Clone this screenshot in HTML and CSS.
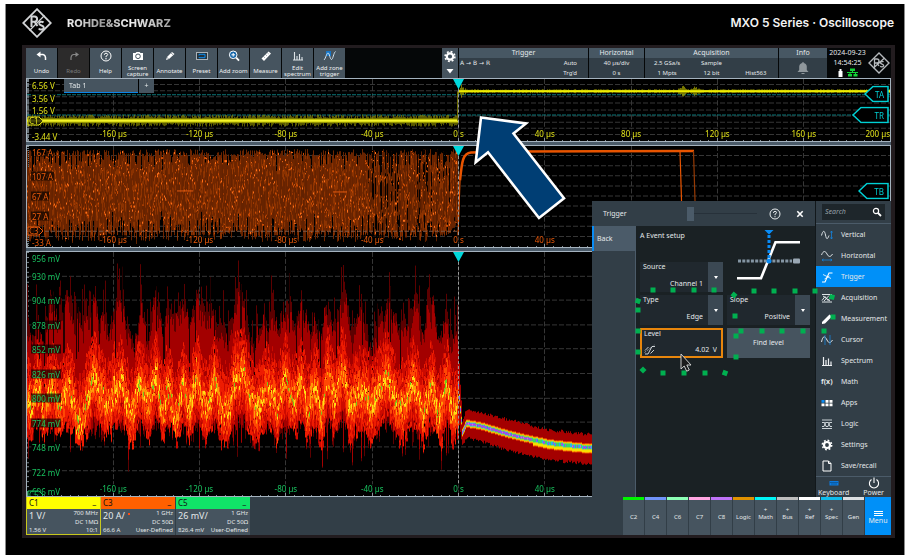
FILE: index.html
```html
<!DOCTYPE html>
<html lang="en">
<head>
<meta charset="utf-8">
<title>MXO 5 Series Oscilloscope</title>
<link rel="stylesheet" href="styles.css">
</head>
<body>
<main class="device">
  <header class="brand">
    <svg class="brand-logo" viewBox="0 0 30 30" aria-hidden="true"><g fill="none" stroke="#d2d4d6"><path d="M15 1.200 28.800 15 15 28.800 1.200 15Z" stroke-width="1.800"/><path d="M9.500 19V8.500h3a2.600 2.600 0 0 1 0 5.200h-3M12.500 13.700 15.500 18" stroke-width="2"/><path d="M21.500 14.500c-1.500-1.500-4.500-.8-4.300 1.200.3 2.200 4.600 1.500 4.600 4 0 2.200-3.800 2.500-5 .8" stroke-width="2"/><path d="M7.500 22.500 22.500 7.500" stroke-width="1.200"/></g></svg>
    <span class="brand-name">ROHDE&amp;SCHWARZ</span>
    <h1 class="model">MXO 5 Series · Oscilloscope</h1>
  </header>

  <section class="screen">
    <div class="topbar">
      <nav class="tools">
        <button class="tool"><svg viewBox="0 0 14 12"><path d="M3 4.500h5q3 .5 2.500 5.500" fill="none" stroke="#fff" stroke-width="1.500"/><path d="M5.500 1.500 1.500 4.500l4 3z" fill="#fff"/></svg><span>Undo</span></button>
        <button class="tool off" disabled><svg viewBox="0 0 14 12"><path d="M10 4.500H6.500Q3.500 5 4 10" fill="none" stroke="#888" stroke-width="1.200"/><path d="m8.500 2 3.500 2.500L8.500 7z" fill="#888"/></svg><span>Redo</span></button>
        <button class="tool"><svg viewBox="0 0 14 12"><circle cx="7" cy="6" r="5" fill="none" stroke="#fff"/><path d="M5.300 4.800q.2-1.600 1.700-1.600t1.700 1.400Q8.700 5.500 7 6.200v1" fill="none" stroke="#fff"/><circle cx="7" cy="8.700" r=".7" fill="#fff"/></svg><span>Help</span></button>
        <button class="tool"><svg viewBox="0 0 14 12"><path d="M2 3h2.500l1-1h3l1 1H12v7H2z" fill="#fff"/><circle cx="7" cy="6.300" r="2.300" fill="#fff" stroke="#46545f"/></svg><span>Screen<br>capture</span></button>
        <button class="tool"><svg viewBox="0 0 14 12"><path d="m3 10 1-3 5-5 2.500 2-5.500 5z" fill="#fff"/><path d="m3.800 7.300 2 1.700M8 3l2.300 2" stroke="#46545f" stroke-width=".6"/></svg><span>Annotate</span></button>
        <button class="tool"><svg viewBox="0 0 14 12"><rect x="1.500" y="2.500" width="11" height="7" fill="#26323a" stroke="#aab2b8"/><path d="M4 5.500V4.300h6v3.400H4V7" fill="none" stroke="#0c8df0"/></svg><span>Preset</span></button>
        <button class="tool"><svg viewBox="0 0 14 12"><circle cx="6.200" cy="4.800" r="3.800" fill="#1768ab" stroke="#fff"/><path d="M6.200 3v3.600M4.400 4.800H8" stroke="#fff"/><path d="m9.200 7.600 2.800 3" stroke="#fff" stroke-width="1.800"/></svg><span>Add zoom</span></button>
        <button class="tool"><svg viewBox="0 0 14 12"><path d="m2.500 8.500 7-7 2.500 2-7 7.500z" fill="#fff"/><path d="m4.500 6.500 1.300 1.200M6.500 4.500l1.300 1.200M8.300 2.700l1.300 1.200" stroke="#46545f" stroke-width=".6"/></svg><span>Measure</span></button>
        <button class="tool"><svg viewBox="0 0 14 12"><path d="M2 10h10M3.500 10V2M6 10V6M8.500 10V4M11 10V7" fill="none" stroke="#dde3e7" stroke-width="1.100"/></svg><span>Edit<br>spectrum</span></button>
        <button class="tool"><svg viewBox="0 0 14 12"><path d="M3 1h5v5H3z" fill="#1576c8"/><path d="M1 10C3 8 3.500 3 5 3s2 6.500 3.500 6.500S10.500 3 12.500 1.500" fill="none" stroke="#cfe0ee"/></svg><span>Add zone<br>trigger</span></button>
      </nav>
      <div class="readouts">
        <button class="gear" aria-label="Trigger options"><svg viewBox="0 0 14 28"><circle cx="7" cy="7.500" r="3.200" fill="none" stroke="#fff" stroke-width="2.200"/><circle cx="7" cy="7.500" r="4.900" fill="none" stroke="#fff" stroke-width="1.600" stroke-dasharray="1.900 1.950"/><path d="M3.500 20h7L7 24.500z" fill="#fff"/></svg></button>
        <section class="readout trig"><h2>Trigger</h2><div class="cells"><span class="chain">A → B → R</span><span class="end">Auto</span><span></span><span class="end">Trg'd</span></div></section>
        <section class="readout horiz"><h2>Horizontal</h2><div class="cells"><span>40 µs/div</span><span>0 s</span></div></section>
        <section class="readout acq"><h2>Acquisition</h2><div class="cells"><span>2.5 GSa/s</span><span>Sample</span><span></span><span>1 Mpts</span><span>12 bit</span><span>Hist563</span></div></section>
        <section class="readout info"><h2>Info</h2><svg viewBox="0 0 14 14"><path d="M1.500 11h11l-1.700-2V5.500Q10.500 2 7 2T3.200 5.500V9z" fill="#8f979c"/><path d="M7 1v2M5.500 12.500h3" stroke="#8f979c" stroke-width="1.200"/></svg></section>
        <div class="clock"><time>2024-09-23</time><time>14:54:25</time>
          <svg viewBox="0 0 24 9"><path d="M2.500 3h4v6h-4zM3.500 1h2v2h-2z" fill="#fff"/><path d="M14 .5h5V3h-5zM12 6h4v2.500h-4zM17.500 6h4v2.500h-4z" fill="#12d436"/><path d="M16.500 3v1.500M11 4.500h11M14 4.500V6M19.500 4.500V6" stroke="#12d436"/></svg></div>
        <svg class="mini-logo" viewBox="0 0 22 22" aria-hidden="true"><g fill="none" stroke="#b6babd"><path d="M11 1 21 11 11 21 1 11Z" stroke-width="1.400"/><path d="M6.500 14.500V7H9a2 2 0 0 1 0 4H6.500M9 11l2 3M15.500 10c-1-1-3-.5-3 .8.2 1.500 3.200 1 3.200 2.800 0 1.500-2.700 1.700-3.500.6M5.500 16l11-10" stroke-width="1.300"/></g></svg>
      </div>
    </div>

    <div class="workspace">
      <div class="plot plot-a" id="plotA"><canvas></canvas>
        <div class="tabs"><button class="tab">Tab 1</button><button class="tab add" aria-label="Add tab">+</button></div>
      </div>
      <div class="plot plot-b" id="plotB"><canvas></canvas></div>
      <div class="plot plot-c" id="plotC"><canvas></canvas></div>

      <div class="overlay">
        <section class="dialog">
          <header class="dialog-head">
            <h2>Trigger</h2>
            <input class="opacity" type="range" min="0" max="100" value="0" aria-label="Transparency">
            <button class="icon-btn" aria-label="Help"><svg viewBox="0 0 12 12"><circle cx="6" cy="6" r="5" fill="none" stroke="#e8ecee"/><path d="M4.500 5q0-1.700 1.500-1.700T7.500 4.700Q7.500 5.500 6 6.200v1" fill="none" stroke="#e8ecee"/><circle cx="6" cy="8.700" r=".6" fill="#e8ecee"/></svg></button>
            <button class="icon-btn" aria-label="Close"><svg viewBox="0 0 12 12"><path d="m3.300 3.300 5.400 5.400M8.700 3.300 3.300 8.700" stroke="#fff" stroke-width="1.600"/></svg></button>
          </header>
          <div class="dialog-side"><button class="back">Back</button></div>
          <form class="dialog-body">
            <h3>A Event setup</h3>
            <svg class="edge" viewBox="0 0 67 54" aria-hidden="true"><path d="M1 50.300h24L39.500 14.300H64" fill="none" stroke="#fff" stroke-width="2.600"/><path d="M2 33h54" stroke="#8495a3" stroke-width="3" stroke-dasharray="3 1.300"/><rect x="57" y="30.500" width="7" height="5" rx="1" fill="#9aa8b4"/><path d="M33 2v29" stroke="#0a8cf5" stroke-width="3" stroke-dasharray="3 2"/><path d="M28.500 2h9L33 6.500z" fill="#0a8cf5"/><circle cx="33" cy="33" r="2.500" fill="#0a8cf5"/></svg>
            <div class="field source"><label for="source">Source</label><select id="source"><option>Channel 1</option></select><i class="drop"></i></div>
            <div class="field"><label for="type">Type</label><select id="type"><option>Edge</option></select><i class="drop"></i></div>
            <div class="field"><label for="slope">Slope</label><select id="slope"><option>Positive</option></select><i class="drop"></i></div>
            <div class="field level"><label for="level">Level</label><input id="level" type="text" value="4.02  V"><svg viewBox="0 0 12 11"><path d="M1 10h3l4-7.500h3M1 6.500 4.500 3M6.500 9.500 10 6" fill="none" stroke="#dde3e6" stroke-width=".9"/><path d="M.5 8.500 10.500 1" stroke="#dde3e6" stroke-width=".6" stroke-dasharray="2 1"/></svg></div>
            <button class="find" type="button">Find level</button>
          </form>
        </section>
        <nav class="menu">
          <div class="search"><input type="search" placeholder="Search" aria-label="Search"><svg viewBox="0 0 10 10"><circle cx="4" cy="4" r="2.600" fill="none" stroke="#fff" stroke-width="1.200"/><path d="m6 6 3 3" stroke="#fff" stroke-width="1.800"/></svg></div>
          <div class="items">
            <a href="#vertical"><svg viewBox="0 0 12 12"><path d="M.5 6.500C2 1 3.500 1 4.500 6s2 4.500 3.500.500" fill="none" stroke="#dde3e6"/><path d="M10.500 2v8M9.500 3.500l1-1.500 1 1.500M9.500 8.500l1 1.500 1-1.500" fill="none" stroke="#1584dd" stroke-width=".8"/></svg>Vertical</a>
            <a href="#horizontal"><svg viewBox="0 0 12 12"><path d="M.5 5C2.500 0 4.500 1 6 4s3.500 3.500 5.500 0" fill="none" stroke="#dde3e6"/><path d="M1 10h10M2.500 9 1 10l1.500 1M9.500 9l1.500 1-1.500 1" fill="none" stroke="#1584dd" stroke-width=".8"/></svg>Horizontal</a>
            <a href="#trigger" class="current"><svg viewBox="0 0 12 12"><path d="M1 11h3L8 2h3.500" fill="none" stroke="#fff" stroke-width="1.100"/><path d="m2 3.500 8 4M8.500 5l-5 3" stroke="#fff" stroke-width=".8"/></svg>Trigger</a>
            <a href="#acquisition"><svg viewBox="0 0 12 12"><path d="M1 2.500h10M1 10h10M1 8.500l3-4 3 4 3-4 1 1M2 4l7 5M8 3.500 3 9" fill="none" stroke="#dde3e6"/></svg>Acquisition</a>
            <a href="#measurement"><svg viewBox="0 0 12 12"><path d="m1 9 7.500-7.500 2.500 2L4 10.500l-3 .5z" fill="#fff"/></svg>Measurement</a>
            <a href="#cursor"><svg viewBox="0 0 12 12"><path d="M.5 8C2 1 4 2 6 6s3.500 3 5.500 0" fill="none" stroke="#dde3e6"/><path d="M4 1v10M9 1v10" stroke="#1584dd" stroke-width=".8"/></svg>Cursor</a>
            <a href="#spectrum"><svg viewBox="0 0 12 12"><path d="M1 10.500h10M2.500 10V2M5 10V5M7.500 10V3.500M10 10V6.500" fill="none" stroke="#eef1f3" stroke-width="1.200"/></svg>Spectrum</a>
            <a href="#math"><b class="fx">f(x)</b>Math</a>
            <a href="#apps"><svg viewBox="0 0 12 12"><path d="M.5 3h3v2.700h-3z" fill="#0a8cf5"/><path d="M4.500 3h3v2.700h-3zM8.500 3h3v2.700h-3zM.5 6.500h3v2.700h-3zM4.500 6.500h3v2.700h-3zM8.500 6.500h3v2.700h-3z" fill="#fff"/></svg>Apps</a>
            <a href="#logic"><svg viewBox="0 0 12 12"><path d="M1 2h10M1 10.500h10M1 4.500h2.500l1.500 4h2l1.500-4H11M1 8.500h2l1.500-4h3l1.500 4h2" fill="none" stroke="#dde3e6" stroke-width=".9"/></svg>Logic</a>
            <a href="#settings"><svg viewBox="0 0 12 12"><circle cx="6" cy="6" r="3" fill="none" stroke="#fff" stroke-width="2.200"/><circle cx="6" cy="6" r="4.700" fill="none" stroke="#fff" stroke-width="1.500" stroke-dasharray="1.800 1.890"/></svg>Settings</a>
            <a href="#save"><svg viewBox="0 0 12 12"><path d="M2 1h5.500L10 3.500V11H2zM7.500 1v2.500H10" fill="none" stroke="#fff"/></svg>Save/recall</a>
          </div>
          <div class="system">
            <button><svg viewBox="0 0 12 12"><path d="M1.500 4h9v4.500h-9z" fill="#0d7be0"/><path d="M2.500 5.500h7M3.500 7h5" stroke="#0b3c66" stroke-dasharray="1 1"/></svg>Keyboard</button>
            <button><svg viewBox="0 0 12 12"><path d="M3.500 2.500a4.600 4.600 0 1 0 5 0M6 .5V6" fill="none" stroke="#fff" stroke-width="1.100"/></svg>Power</button>
          </div>
        </nav>
      </div>
    </div>

    <footer class="dock">
      <section class="channel c1"><h2>C1<i>_</i></h2><div class="vals"><strong>1 V/</strong><span>700 MHz</span><span>DC 1MΩ</span><em>1.56 V</em><span>10:1</span></div></section>
      <section class="channel c3"><h2>C3<i>_</i></h2><div class="vals"><strong>20 A/<sup></sup></strong><span>1 GHz</span><span>DC 50Ω</span><em>66.6 A</em><span>User-Defined</span></div></section>
      <section class="channel c5"><h2>C5<i>_</i></h2><div class="vals"><strong>26 mV/</strong><span>1 GHz</span><span>DC 50Ω</span><em>826.4 mV</em><span>User-Defined</span></div></section>
      <div class="sources">
        <button class="s-c2">C2</button><button class="s-c4">C4</button><button class="s-c6">C6</button><button class="s-c7">C7</button><button class="s-c8">C8</button><button class="s-logic">Logic</button><button class="s-math"><small>+</small>Math</button><button class="s-bus"><small>+</small>Bus</button><button class="s-ref"><small>+</small>Ref</button><button class="s-spec"><small>+</small>Spec</button><button class="s-gen">Gen</button>
        <button class="menu-btn"><svg viewBox="0 0 9 5"><path d="M0 .5h9M0 2.500h9M0 4.500h9" stroke="#fff"/></svg>Menu</button>
      </div>
    </footer>
  </section>
</main>

<svg class="notes" viewBox="0 0 908 558" aria-hidden="true">
  <path d="M481 117.500 526 123.500 513.500 133.500 564 198.300 539 218 488 152.300 475.700 162.300Z" fill="#003e74" stroke="#fff" stroke-width="2.600"/>
  <g fill="#00b050" id="dots"></g>
  <path d="M681 354v15l3.200-3 2.500 5.200 2.600-1.200-2.500-5h4.200z" fill="#1c1c1c" stroke="#ddd" stroke-width=".9"/>
</svg>
<script src="scope.js"></script>
</body>
</html>
```

FILE: styles.css
```css
* { box-sizing: border-box; }
html { background: #fff; }
body {
  position: relative;
  margin: 0;
  min-height: 100vh;
  padding: 4px 3px 3px 5px;
  display: flex;
  font-family: "Noto Sans", "Open Sans", sans-serif;
  font-size: 7px;
  line-height: 10px;
  color: #e4e8ea;
}
h1, h2, h3 { margin: 0; font-weight: 400; font-size: inherit; }
button, input, select { font: inherit; color: inherit; border: 0; margin: 0; padding: 0; background: none; border-radius: 0; }
i, em { font-style: normal; }
svg { display: block; }

.device {
  flex: 1;
  display: flex;
  flex-direction: column;
  background: #000;
  border: solid #8b8b8b;
  border-width: 0 1px;
  padding: 0 9px 17px 16px;
}
.brand { height: 41px; display: flex; align-items: center; padding: 0 1px 4px 0; }
.brand-logo { width: 30px; height: 30px; }
.brand-name {
  margin-left: 15px;
  font: 800 11px/14px Inter, sans-serif;
  color: transparent;
  background: linear-gradient(90deg, #f2f2f2, #999 35%, #f2f2f2 60%, #a2a2a2);
  background-clip: text;
}
.model { margin-left: auto; font: 600 12px/16px Inter, sans-serif; color: #f2f2f2; }

.screen { flex: 1; display: flex; flex-direction: column; border: 3px solid #221c1f; border-left-width: 4px; border-right-width: 4px; }

.topbar { display: flex; justify-content: space-between; height: 30px; background: #050708; }
.tools { display: flex; gap: 1px; }
.tool {
  width: 31px;
  background: #46545f;
  font-size: 6px;
  line-height: 6px;
  display: grid;
  grid-template-rows: 15px 15px;
  place-items: center;
  color: #f0f2f3;
}
.tool.off { background: #2c2b2b; color: #77797a; }
.tool svg { width: 14px; height: 12px; }

.readouts { display: flex; gap: 1px; font-size: 6px; }
.gear { width: 16px; background: #46545f; }
.gear svg { width: 14px; height: 28px; margin: auto; }
.readout { background: #323e47; }
.readout h2 { background: #475763; text-align: center; font-size: 7px; line-height: 10px; }
.readout svg { width: 14px; height: 14px; margin: 3px auto; }
.cells { display: grid; grid-auto-rows: 10px; text-align: center; }
.trig { width: 129px; }
.trig .cells { grid-template-columns: 1fr 1fr; padding: 0 11px 0 1px; text-align: left; }
.trig .end { text-align: right; }
.trig .chain { font-family: "DejaVu Sans", sans-serif; }
.horiz { width: 55px; }
.acq { width: 133px; }
.acq .cells { grid-template-columns: 1fr 1fr 1fr; }
.info { width: 48px; }
.clock { width: 39px; display: grid; justify-items: center; align-content: start; grid-auto-rows: 10px; font-size: 7px; line-height: 9px; }
.clock svg { width: 24px; height: 9px; }
.mini-logo { width: 22px; height: 22px; align-self: center; margin: 0 1px 0 0; }

.workspace { flex: 1; min-height: 400px; position: relative; display: flex; flex-direction: column; gap: 3px; background: #4b5b69; }
.plot { position: relative; background: #000; border: 1px solid #a4b2be; overflow: hidden; flex-basis: 0; font-size: 8px; line-height: 9px; }
.plot canvas { position: absolute; inset: 0; width: 100%; height: 100%; }
.plot-a { flex-grow: 63; color: #e2e21a; }
.plot-b { flex-grow: 102; color: #ec5a0a; }
.plot-c { flex-grow: 248; color: #18c05e; }
.y-label { position: absolute; left: 4px; padding: 0 1px; background: rgba(0, 0, 0, .65); transform: translateY(-50%); white-space: nowrap; }
.x-label { position: absolute; bottom: 3px; background: rgba(0, 0, 0, .65); transform: translateX(-50%); white-space: nowrap; }
.x-label.last { transform: translateX(-100%); }
.flag { position: absolute; right: 1px; height: 17px; transform: translateY(-50%); }
.marker { position: absolute; left: 0; width: 17px; height: 10px; transform: translateY(-50%); }
.tabs { position: absolute; left: 37px; top: 0; display: flex; gap: 1px; z-index: 1; color: #e4e8ea; }
.tab { width: 74px; height: 14px; padding-left: 5px; background: #46545f; border-bottom: 1px solid #0a86e8; text-align: left; font-size: 7px; }
.tab.add { width: 15px; padding: 0; text-align: center; border-bottom-color: #46545f; }

.overlay { position: absolute; right: 0; bottom: 0; top: 123px; display: grid; grid-template-columns: 223px 75px; gap: 1px; background: #12181b; z-index: 2; }
.dialog { display: grid; grid-template: 25px 1fr / 44px 1fr; background: #1a2124; }
.dialog-head { grid-column: 1 / 3; display: flex; align-items: center; background: #323e47; padding: 0 9px 0 11px; }
.opacity { -webkit-appearance: none; appearance: none; width: 70px; height: 14px; margin-left: auto; margin-right: 12px; background: linear-gradient(#27313a, #27313a) center / 100% 1px no-repeat; }
.opacity::-webkit-slider-thumb { -webkit-appearance: none; width: 7px; height: 14px; background: #4b5b69; }
.icon-btn svg { width: 12px; height: 12px; }
.icon-btn + .icon-btn { margin-left: 13px; }
.dialog-side { background: #323e47; border-right: 1px solid #4b5b69; }
.back { width: 100%; height: 25px; padding-left: 3px; text-align: left; background: #4b5b69; border-left: 2px solid #0a8cf5; }
.dialog-body { display: grid; grid-template-columns: 1fr 1fr; grid-template-rows: 33px; grid-auto-rows: 30px; gap: 3px 4px; padding: 0 5px 0 4px; align-content: start; }
.dialog-body h3 { line-height: 20px; }
.edge { grid-area: 1 / 2 / 3 / 3; width: 67px; height: 54px; margin: 2px 0 0 9px; }
.source { grid-area: 2 / 1; }
.field { display: grid; grid-template: 10px 1fr / 1fr 15px; background: #20282e; }
.field label { grid-area: 1 / 1; padding-left: 3px; z-index: 1; }
.field select, .field input { grid-area: 1 / 1 / 3 / 3; width: 100%; min-width: 0; padding: 14px 20px 0 0; text-align: right; text-align-last: right; -webkit-appearance: none; appearance: none; }
.drop { grid-area: 1 / 2 / 3 / 3; background: #3b4853; display: grid; place-items: center; pointer-events: none; }
.drop::before { content: ""; border: 2px solid transparent; border-top: 3px solid #fff; border-bottom: 0; }
.level { border: 2px solid #e8860c; }
.level label { padding-left: 2px; line-height: 7px; }
.level input { padding: 14px 4px 0 14px; white-space: pre; }
.level svg { grid-area: 2 / 1; width: 12px; height: 11px; margin: 4px 0 0 2px; }
.find { background: #46545f; }

.menu { display: flex; flex-direction: column; background: #323e47; }
.search { display: flex; align-items: center; margin: 3px 6px; padding: 0 3px; height: 16px; background: #1e262b; }
.search input { width: 100%; min-width: 0; outline: 0; }
.search input::placeholder { color: #97a1a8; font-style: italic; opacity: 1; }
.search svg { width: 10px; height: 10px; flex: none; }
.items { flex: 1; display: grid; grid-auto-rows: 1fr; border: solid #4b5b69; border-width: 1px 0; }
.items a { display: flex; align-items: center; gap: 8px; padding-left: 5px; color: inherit; text-decoration: none; }
.items a svg, .fx { width: 12px; height: 12px; }
.fx { font-size: 7px; line-height: 12px; }
.items a.current { background: #0090f8; }
.system { height: 20px; display: flex; justify-content: space-between; padding: 0 7px 0 2px; }
.system button { display: grid; justify-items: center; line-height: 8px; }
.system svg { width: 12px; height: 12px; }

.dock { display: flex; height: 38px; background: #323e47; font-size: 6px; }
.channel { width: 75px; border-right: 1px solid #323e47; background: #46545f; }
.channel h2 { display: flex; justify-content: space-between; padding: 0 4px 0 2px; height: 12px; font-size: 8px; line-height: 12px; color: #111; }
.channel h2 i { line-height: 8px; }
.c1 { border: 1px solid #c8c81e; border-top: 0; }
.c1 h2 { background: #ff0; }
.c3 h2 { background: #ff6000; }
.c5 h2 { background: #10e468; }
.vals { display: grid; grid-template-columns: auto 1fr; grid-template-rows: 9px 8px 8px; line-height: 9px; padding: 0 2px; }
.vals strong { grid-row: 1 / 3; font-weight: 400; font-size: 9px; line-height: 13px; }
.vals sup { display: inline-block; width: 2px; height: 2px; margin-left: 3px; background: #ff4b12; }
.vals span { text-align: right; }
.sources { margin-left: auto; display: flex; gap: 1px; }
.sources button { width: 21px; background: #46545f; border-top: 3px solid #fff; line-height: 7px; display: flex; flex-direction: column; align-items: center; justify-content: center; }
.sources small { font-size: 6px; height: 7px; margin-top: -7px; }
.sources .s-c2 { border-color: #00f400; }
.sources .s-c4 { border-color: #7093fa; }
.sources .s-c6 { border-color: #8dffb6; }
.sources .s-c7 { border-color: #ffa6e2; }
.sources .s-c8 { border-color: #bf73f8; }
.sources .s-logic { border-color: #e09100; }
.sources .s-math { border-color: #00f6f6; }
.sources .s-bus { border-color: #bdbdbd; }
.sources .s-spec { border-color: #0fbcec; }
.sources .s-gen { border-color: #dcdfe2; }
.sources .menu-btn { width: 26px; background: #0090f8; border-color: #0090f8; font-size: 7px; gap: 1px; }
.menu-btn svg { width: 9px; height: 5px; }

.notes { position: absolute; left: 0; top: 0; width: 100%; z-index: 3; pointer-events: none; }
```

FILE: scope.js
```js
// Deterministic noise source so every repaint draws the same trace
let seed = 7;
function rnd() {
  seed = (seed * 1664525 + 1013904223) >>> 0;
  return seed / 4294967296;
}
function gauss() { return (rnd() + rnd() + rnd() + rnd() - 2) / 1.15; }

const ZERO = 431;   // trace x of t = 0 in plot units
const WIDTH = 863;

function rect(c, x, y, w, h, color) { c.fillStyle = color; c.fillRect(x, y, w, h); }

function lerpPath(points, x) {
  for (let i = 1; i < points.length; i++) {
    if (x <= points[i][0]) {
      const [x0, y0] = points[i - 1], [x1, y1] = points[i];
      return y0 + (y1 - y0) * (x - x0) / (x1 - x0);
    }
  }
  return points[points.length - 1][1];
}

function grid(c, h, rows) {
  c.strokeStyle = "#363636";
  c.lineWidth = 1;
  c.setLineDash([5, 2]);
  c.beginPath();
  for (let i = 1; i < rows; i++) {
    const y = Math.round(h * i / rows) - .5;
    c.moveTo(0, y); c.lineTo(WIDTH, y);
  }
  for (let i = 1; i < 10; i++) {
    const x = Math.floor(WIDTH * i / 10) + .5;
    c.moveTo(x, 0); c.lineTo(x, h);
  }
  c.stroke();
  c.setLineDash([]);
  for (let i = 0; i < 100; i++) rect(c, Math.floor(i * WIDTH / 100), h - (i % 10 ? 1 : 4), 1, 4, "#8a949c");
  for (let y = 0; y < h; y += h / rows / 5) rect(c, 0, Math.round(y), 2, 1, "#7b858d");
}

function triggerMark(c, h) {
  c.strokeStyle = "#999";
  c.setLineDash([3, 2]);
  c.beginPath(); c.moveTo(ZERO + .5, 0); c.lineTo(ZERO + .5, h); c.stroke();
  c.setLineDash([]);
  c.fillStyle = "#00d8dc";
  c.beginPath(); c.moveTo(ZERO - 5, 0); c.lineTo(ZERO + 6, 0); c.lineTo(ZERO + .5, 10); c.fill();
}

function drawA(c, h) {
  grid(c, h, 10);
  c.strokeStyle = "#0a7678";
  c.setLineDash([4, 1]);
  c.beginPath(); c.moveTo(0, 15.500); c.lineTo(WIDTH, 15.500); c.moveTo(0, 35.500); c.lineTo(WIDTH, 35.500); c.stroke();
  c.setLineDash([]);
  for (let x = 0; x < ZERO; x++) {
    const up = 2 + rnd() * 4, down = 2 + rnd() * 4;
    rect(c, x, 41 - up, 1, up + down, "rgba(150,150,0,.6)");
    rect(c, x, 39, 1, 4, "#a8a800");
    rect(c, x, 40, 1, 2, "#f4f428");
  }
  rect(c, ZERO - 1, 12, 1, 29, "#6d6d00");
  for (let x = ZERO; x < WIDTH; x++) {
    let a = 1 + rnd();
    for (const b of [ZERO + 3, 655, 669]) {
      const d = Math.abs(x - b);
      if (d < 6) a += (6 - d) * .9 * rnd();
    }
    rect(c, x, 12 - a, 1, 2 * a, "rgba(170,170,0,.7)");
    rect(c, x, 11, 1, 2, "#eeee00");
  }
}

function drawB(c, h) {
  grid(c, h, 10);
  for (let x = 0; x < ZERO; x++) {
    const sparse = x > 340;
    const top = 3 + rnd() * 7 + (rnd() < .25 ? rnd() * 16 : 0);
    const bottom = h - 17 + rnd() * 12 - (rnd() < .3 ? rnd() * 20 : 0);
    const glow = sparse ? 84 + rnd() * 30 : 98 + rnd() * 16;
    rect(c, x, top, 1, bottom - top, `rgb(${glow},${glow * .34},0)`);
    if (sparse && rnd() < .25) rect(c, x, top, 1, 20 + rnd() * 40, "#080200");
    if (sparse && rnd() < .15) rect(c, x, bottom - 30 * rnd(), 1, 30, "#080200");
    for (let k = 0; k < 4; k++) {
      const y = Math.round(top + 3 + rnd() * (bottom - top - 6));
      rect(c, x, y, 1, 3 + Math.round(rnd() * 5), "rgba(160,60,2,.6)");
    }
    for (let k = 0; k < 3; k++) {
      const y = Math.round(top + rnd() * (bottom - top - 3));
      rect(c, x, y, rnd() < .3 ? 2 : 1, 1 + Math.round(rnd()), rnd() < .35 ? "#ff701a" : "#cc4c04");
    }
  }
  rect(c, 150, 44, 16, 1, "#e05a10");
  rect(c, 306, 45, 14, 1, "#e05a10");
  c.strokeStyle = "#7c5a48";
  c.setLineDash([4, 2]);
  c.beginPath(); c.moveTo(0, 84.500); c.lineTo(ZERO, 84.500); c.stroke();
  c.setLineDash([]);
  c.strokeStyle = "#e85400";
  c.lineWidth = 1.200;
  c.beginPath(); c.moveTo(ZERO, 89); c.lineTo(ZERO + 2, 34); c.stroke();
  c.lineWidth = 2.500;
  c.beginPath(); c.moveTo(ZERO + 2, 34); c.bezierCurveTo(ZERO + 4, 14, ZERO + 5, 7.500, ZERO + 13, 6.500);
  c.lineTo(ZERO + 55, 5.500); c.lineTo(667, 5); c.stroke();
  c.lineWidth = 1.200;
  c.beginPath(); c.moveTo(653, 5); c.lineTo(655, 70); c.stroke();
  c.strokeStyle = "#963a04";
  c.beginPath(); c.moveTo(666.500, 5); c.lineTo(668.500, 70); c.stroke();
  c.lineWidth = 1;
}

// Density trace: dark red envelope, with a hot core that wanders from column to column
function drawC(c, h) {
  grid(c, h, 10);
  let drift = 0, reach = 0, spike = 0;
  for (let x = 0; x < ZERO; x++) {
    drift = drift * .8 + gauss() * 9;
    reach = reach * .7 + gauss() * 13;
    const wave = Math.sin(x / 2.900 + Math.sin(x / 23) * 3) * 13 + Math.sin(x / 7.300) * 5;
    const mid = 141 + wave + drift * .7;
    spike = rnd() < .22 ? rnd() * 42 : spike * .35;
    const top = Math.max(5, 66 + wave * .9 - reach - spike);
    const bottom = Math.min(224, 183 + wave * .5 + gauss() * 11 + (rnd() < .1 ? rnd() * 26 : 0));
    rect(c, x, top, 1, bottom - top, "#5c0000");
    const solid = Math.max(top, 74 + wave * .8 - reach + gauss() * 8);
    rect(c, x, solid, 1, bottom - solid - rnd() * 14, "#a30000");
    if (rnd() < .1) rect(c, x, top, 1, 40 + rnd() * 20, "#240000");
    for (let y = mid - 44; y < mid + 38; y += 4) {
      const d = (y - mid) / 24;
      const v = Math.exp(-d * d) * .62 + rnd() * .5 - .12;
      if (v > .12 && y < bottom - 4) {
        const color = v > .96 ? "#74c81c" : v > .88 ? "#ffe014" : v > .76 ? "#ff9a08" : v > .54 ? "#ff4804" : v > .32 ? "#ee1c02" : "#cc0a00";
        rect(c, x, Math.round(y + rnd() * 2), rnd() < .4 ? 2 : 1, 4 + Math.round(rnd() * 3), color);
      }
    }
  }
  const mid = [[431, 135], [435, 182], [439, 173], [452, 175], [479, 183], [499, 188], [522, 193], [545, 195.500], [565, 197.500], [863, 205]];
  const up = [[431, 40], [435, 10], [439, 12], [452, 12], [485, 13], [522, 12], [565, 12], [863, 12]];
  const down = [[431, 30], [435, 12], [439, 13], [452, 14], [485, 15], [522, 15], [565, 15], [863, 15]];
  for (let x = ZERO; x < WIDTH; x++) {
    const m = Math.round(lerpPath(mid, x));
    const u = lerpPath(up, x) + rnd() * 3, d = lerpPath(down, x) + rnd() * 3;
    rect(c, x, m - u, 1, u + d, "#a40000");
    const wide = x > 505 ? 2 : 0;
    rect(c, x, m - 4, 1, 8 + wide, rnd() < .5 ? "#ff7a00" : "#ff4a00");
    rect(c, x, m - 3, 1, 6 + wide, "#f4e000");
    rect(c, x, m - 2, 1, 4, rnd() < .6 ? "#39d66a" : "#22b8ee");
    if (x < 505 || rnd() < .4) rect(c, x, m - 1, 1, 2, rnd() < .7 ? "#b53cf0" : rnd() < .5 ? "#e05be8" : "#3a7cf0");
  }
}

const plots = [
  { id: "plotA", unit: " V", max: 6.56, min: -3.44, ticks: [6.56, 3.56, 1.56, -3.44], base: 61, draw: drawA, last: 200,
    marker: { name: "C1", at: 41 / 61 }, flags: [["TA", 15 / 61, 25], ["TR", 35 / 61, 37]] },
  { id: "plotB", unit: " A", max: 167, min: -33, ticks: [167, 107, 67, 27, -33], base: 100, draw: drawB, last: 40,
    marker: { name: "C3", at: 84 / 100 }, flags: [["TB", 45 / 100, 31]] },
  { id: "plotC", unit: " mV", max: 956, min: 696, ticks: [956, 930, 904, 878, 852, 826, 800, 774, 748, 722, 696], base: 246, draw: drawC, last: 40,
    marker: { name: "C5", at: 245 / 246 }, flags: [] }
];

for (const p of plots) {
  const el = document.getElementById(p.id);
  const canvas = el.querySelector("canvas");
  const color = getComputedStyle(el).color;
  for (const v of p.ticks) {
    const s = document.createElement("span");
    s.className = "y-label";
    s.textContent = v + p.unit;
    s.style.top = `clamp(6px, ${(p.max - v) / (p.max - p.min) * 100}%, calc(100% - 5px))`;
    el.append(s);
  }
  for (let t = -160; t <= p.last; t += 40) {
    const s = document.createElement("span");
    s.className = t === 200 ? "x-label last" : "x-label";
    s.textContent = t === 0 ? "0 s" : t + " µs";
    s.style.left = (t + 200) / 4 + "%";
    el.append(s);
  }
  el.insertAdjacentHTML("beforeend",
    `<svg class="marker" style="top:${p.marker.at * 100}%" viewBox="0 0 17 10"><path d="M1 1h11l4 4-4 4H1z" fill="#000" fill-opacity=".7" stroke="${color}"/><text x="2" y="8" font-size="8" fill="${color}">${p.marker.name}</text></svg>`);
  for (const [name, at, w] of p.flags) {
    el.insertAdjacentHTML("beforeend",
      `<svg class="flag" style="top:${at * 100}%;width:${w}px" viewBox="0 0 ${w} 17"><path d="M1 8.500 9 1h${w - 10}v15H9z" fill="#000" stroke="#00d0d4" stroke-width="1.500"/><text x="${w - 5}" y="12" text-anchor="end" font-size="8" fill="#00d0d4">${name}</text></svg>`);
  }
  const paint = () => {
    canvas.width = canvas.clientWidth;
    canvas.height = canvas.clientHeight;
    const c = canvas.getContext("2d");
    c.scale(canvas.width / WIDTH, canvas.height / p.base);
    seed = 7;
    p.draw(c, p.base);
    triggerMark(c, p.base);
  };
  paint();
  addEventListener("resize", paint);
}

// Centres of the highlighter dots that outline the edited fields
const dots = [
  [653, 290], [673, 290], [694, 290], [714, 290], [734, 295, 40], [754, 291], [774, 291], [795, 291], [815, 291],
  [832, 297, 15], [833, 317], [824, 331], [803, 331], [782, 331], [762, 331], [741, 331], [735, 316], [736, 336], [736, 357],
  [725, 373, 20], [705, 373], [684, 373], [663, 373], [643, 370, 45], [638, 352], [638, 331], [638, 310], [638, 301, 20]
];
document.getElementById("dots").innerHTML = dots.map(([x, y, r = 0]) =>
  `<rect x="${x - 2.5}" y="${y - 2.5}" width="5" height="5" transform="rotate(${r} ${x} ${y})"/>`).join("");
```
